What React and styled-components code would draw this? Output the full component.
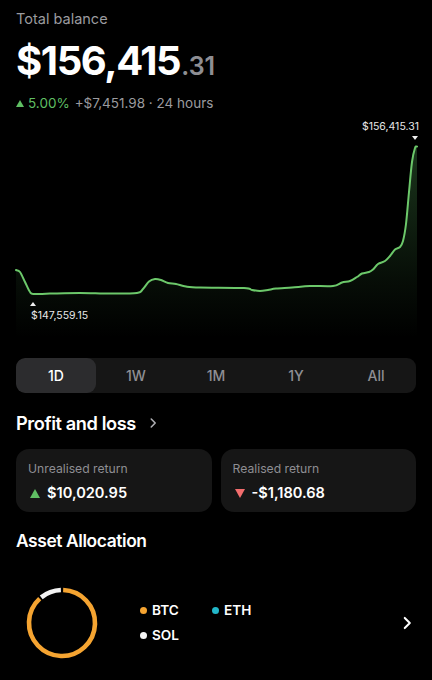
import React from 'react'
import styled, { createGlobalStyle } from 'styled-components'

const GlobalStyle = createGlobalStyle`
  body {
    margin: 0;
    background: #000;
    font-family: Inter, 'Noto Sans', sans-serif;
    color: #fff;
    -webkit-font-smoothing: antialiased;
  }
`

const Page = styled.div`
  width: 432px;
  height: 680px;
  overflow: hidden;
  box-sizing: border-box;
  padding: 10px 16px 0;
  background: #000;
`

const Caption = styled.div`
  font-size: 14.5px;
  line-height: 18px;
  color: #9b9b9f;
`

const Balance = styled.div`
  margin-top: 9px;
  display: flex;
  align-items: baseline;
  line-height: 48px;
`

const Whole = styled.span`
  font-size: 40px;
  font-weight: 700;
  letter-spacing: -1.4px;
`

const Cents = styled.span`
  font-size: 25px;
  font-weight: 600;
  color: #8e8e93;
  margin-left: 1px;
`

const Change = styled.div`
  margin-top: 4px;
  display: flex;
  align-items: center;
  gap: 5px;
  font-size: 13.5px;
  line-height: 18px;
  color: #9b9b9f;
`

const Up = styled.span`
  color: #5fbf63;
  display: inline-flex;
  align-items: center;
  gap: 4px;
`

const Tri = styled.span`
  width: 0;
  height: 0;
  border-left: ${p => p.$size / 2 + 1}px solid transparent;
  border-right: ${p => p.$size / 2 + 1}px solid transparent;
  ${p => p.$down ? 'border-top' : 'border-bottom'}: ${p => p.$size}px solid ${p => p.$color};
`

const Chart = styled.div`
  position: relative;
  margin: 8px -16px 0;
  height: 218px;
`

const Marker = styled.div`
  position: absolute;
  display: flex;
  flex-direction: column;
  align-items: ${p => p.$align};
  gap: 3px;
  font-size: 10.5px;
  line-height: 13px;
  color: #e8e8e8;
`

const Segments = styled.div`
  margin-top: 20px;
  display: grid;
  grid-template-columns: repeat(5, 1fr);
  height: 35px;
  border-radius: 9px;
  background: #161616;
  overflow: hidden;
`

const Segment = styled.div`
  display: flex;
  align-items: center;
  justify-content: center;
  border-radius: 9px;
  font-size: 14px;
  font-weight: 500;
  color: ${p => p.$active ? '#fff' : '#8e8e93'};
  background: ${p => p.$active ? '#2c2c2e' : 'transparent'};
`

const SectionTitle = styled.div`
  display: flex;
  align-items: center;
  gap: 10px;
  font-size: ${p => p.$size}px;
  font-weight: 600;
  letter-spacing: -0.4px;
  line-height: 24px;
  margin-top: ${p => p.$top}px;
`

const Cards = styled.div`
  margin-top: 14px;
  display: grid;
  grid-template-columns: 1fr 1fr;
  gap: 9px;
`

const Card = styled.div`
  height: 63px;
  box-sizing: border-box;
  padding: 12px 12px 0;
  border-radius: 13px;
  background: #161616;
`

const CardLabel = styled.div`
  font-size: 12.2px;
  line-height: 16px;
  color: #8e8e93;
`

const CardValue = styled.div`
  margin-top: 6px;
  display: flex;
  align-items: center;
  gap: 7px;
  font-size: 14.6px;
  font-weight: 600;
  line-height: 20px;
  padding-left: 2px;
`

const Allocation = styled.div`
  margin-top: 32px;
  display: flex;
  align-items: center;
  padding-left: 8px;
`

const Legend = styled.div`
  margin: -1px 0 0 40px;
  display: grid;
  grid-template-columns: 72px 72px;
  row-gap: 9px;
  flex: 1;
`

const LegendItem = styled.div`
  display: flex;
  align-items: center;
  gap: 5px;
  font-size: 13.6px;
  font-weight: 600;
  line-height: 16px;
  &::before {
    content: '';
    width: 7px;
    height: 7px;
    border-radius: 50%;
    background: ${p => p.$color};
  }
`

const ChevronSlot = styled.div`
  display: flex;
  margin-top: 0;
`

const points = [
  [16, 268], [20, 270], [25, 280], [30, 290], [34, 292], [50, 291.6], [80, 291], [110, 291.6],
  [137, 291], [143, 287], [149, 279.5], [155, 277], [161, 278], [168, 281], [176, 282],
  [186, 284.5], [200, 285.5], [244, 286], [252, 288], [260, 289], [268, 288], [276, 286.5],
  [292, 285.5], [310, 284], [333, 284], [342, 280.5], [350, 279], [357, 275], [362, 271.5],
  [369, 270], [373, 267.5], [378, 262], [385, 259], [390, 254], [395, 247.5], [400, 245],
  [403, 239], [406, 222], [409, 190], [412, 160], [415, 146], [417, 144.5],
]

const smooth = pts => {
  let d = `M${pts[0][0]},${pts[0][1]}`
  for (let i = 0; i < pts.length - 1; i++) {
    const p0 = pts[i - 1] || pts[i]
    const p1 = pts[i]
    const p2 = pts[i + 1]
    const p3 = pts[i + 2] || p2
    const c1 = [p1[0] + (p2[0] - p0[0]) / 6, p1[1] + (p2[1] - p0[1]) / 6]
    const c2 = [p2[0] - (p3[0] - p1[0]) / 6, p2[1] - (p3[1] - p1[1]) / 6]
    d += ` C${c1[0].toFixed(2)},${c1[1].toFixed(2)} ${c2[0].toFixed(2)},${c2[1].toFixed(2)} ${p2[0]},${p2[1]}`
  }
  return d
}

const TOP = 118

const LineChart = () => {
  const shifted = points.map(([x, y]) => [x, y - TOP])
  const line = smooth(shifted)
  const area = `${line} L417,218 L16,218 Z`
  return (
    <Chart>
      <svg width="432" height="218" viewBox="0 0 432 218">
        <defs>
          <linearGradient id="fill" x1="0" y1="0" x2="0" y2="1">
            <stop offset="0" stopColor="#5fbf63" stopOpacity="0.28" />
            <stop offset="0.7" stopColor="#5fbf63" stopOpacity="0.07" />
            <stop offset="1" stopColor="#5fbf63" stopOpacity="0" />
          </linearGradient>
        </defs>
        <path d={area} fill="url(#fill)" />
        <path d={line} fill="none" stroke="#6cc86a" strokeWidth="2" strokeLinejoin="round" strokeLinecap="round" />
      </svg>
      <Marker $align="flex-end" style={{ right: 13, top: 0 }}>
        <span>$156,415.31</span>
        <Tri $down $size={4} $color="#f0f0f0" style={{ marginRight: 1 }} />
      </Marker>
      <Marker $align="flex-start" style={{ left: 31, top: 182 }}>
        <Tri $size={4} $color="#f0f0f0" style={{ marginLeft: -1 }} />
        <span>$147,559.15</span>
      </Marker>
    </Chart>
  )
}

const Donut = () => {
  const r = 33
  const c = 2 * Math.PI * r
  const arc = (from, to) => `${((to - from) / 360) * c} ${c}`
  return (
    <svg width="76" height="76" viewBox="0 0 76 76">
      <circle cx="38" cy="38" r={r} fill="none" stroke="#f5a431" strokeWidth="4.6"
        strokeDasharray={arc(2, 317)} transform="rotate(-88 38 38)" />
      <circle cx="38" cy="38" r={r} fill="none" stroke="#f2f2f2" strokeWidth="4.6"
        strokeDasharray={arc(321, 358)} transform="rotate(231 38 38)" />
    </svg>
  )
}

const Chevron = ({ color, size }) => (
  <svg width={size} height={size} viewBox="0 0 16 16">
    <polyline points="6,3.5 10.5,8 6,12.5" fill="none" stroke={color} strokeWidth="1.8"
      strokeLinecap="round" strokeLinejoin="round" />
  </svg>
)

const ranges = ['1D', '1W', '1M', '1Y', 'All']

const App = () => (
  <Page>
    <GlobalStyle />
    <Caption>Total balance</Caption>
    <Balance>
      <Whole>$156,415</Whole>
      <Cents>.31</Cents>
    </Balance>
    <Change>
      <Up>
        <Tri $size={7} $color="#5fbf63" />
        5.00%
      </Up>
      <span>+$7,451.98 · 24 hours</span>
    </Change>

    <LineChart />

    <Segments>
      {ranges.map(r => (
        <Segment key={r} $active={r === '1D'}>{r}</Segment>
      ))}
    </Segments>

    <SectionTitle $size={18.2} $top={18}>
      Profit and loss
      <Chevron color="#b0b0b4" size={14} />
    </SectionTitle>

    <Cards>
      <Card>
        <CardLabel>Unrealised return</CardLabel>
        <CardValue>
          <Tri $size={9} $color="#5fbf63" />
          $10,020.95
        </CardValue>
      </Card>
      <Card>
        <CardLabel>Realised return</CardLabel>
        <CardValue>
          <Tri $down $size={9} $color="#f26d6d" />
          -$1,180.68
        </CardValue>
      </Card>
    </Cards>

    <SectionTitle $size={17.4} $top={17}>Asset Allocation</SectionTitle>

    <Allocation>
      <Donut />
      <Legend>
        <LegendItem $color="#f5a431">BTC</LegendItem>
        <LegendItem $color="#22b7c9">ETH</LegendItem>
        <LegendItem $color="#f5f5f5">SOL</LegendItem>
      </Legend>
      <ChevronSlot>
        <Chevron color="#ffffff" size={18} />
      </ChevronSlot>
    </Allocation>
  </Page>
)

export default App
